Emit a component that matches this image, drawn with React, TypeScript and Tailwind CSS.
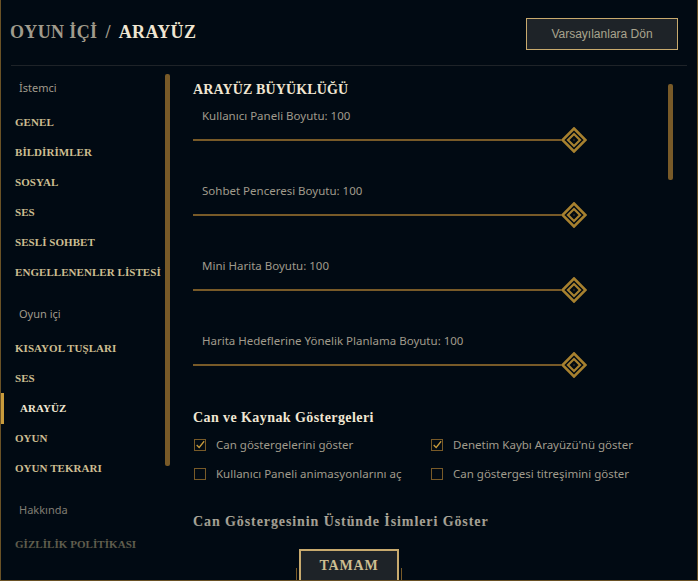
import React from "react";

const serif = { fontFamily: '"Liberation Serif", "DejaVu Serif", serif' };
const sans = { fontFamily: '"Noto Sans", "Liberation Sans", sans-serif' };
const sans2 = { fontFamily: '"Liberation Sans", "DejaVu Sans", sans-serif' };

function Thumb() {
  return (
    <svg width="26" height="26" viewBox="0 0 26 26" className="shrink-0">
      <path d="M13 1.5 L24.5 13 L13 24.5 L1.5 13 Z" fill="#010a13" stroke="#a7812f" strokeWidth="2.6" />
      <path d="M13 7 L19 13 L13 19 L7 13 Z" fill="#010a13" stroke="#a7812f" strokeWidth="2.2" />
      <circle cx="13" cy="13" r="1.2" fill="#2a2416" />
    </svg>
  );
}

function Slider({ label }: { label: string }) {
  return (
    <div className="flex h-[75px] flex-col">
      <div className="h-[16px] pl-[9px] text-[11.5px] leading-[16px] text-[#a09b8c]" style={sans}>
        {label}
      </div>
      <div className="mt-[3px] flex h-[26px] items-center">
        <div className="h-[2px] flex-1 bg-[#785a28]" />
        <Thumb />
      </div>
    </div>
  );
}

function Check({ checked, label }: { checked?: boolean; label: string }) {
  return (
    <div className="flex h-[29px] items-center gap-[10px]">
      <div className="flex h-[12px] w-[12px] items-center justify-center border border-[#785a28]">
        {checked && (
          <svg width="12" height="12" viewBox="0 0 12 12">
            <path d="M2 6 L5 9 L11 1.5" fill="none" stroke="#c89b3c" strokeWidth="1.5" />
          </svg>
        )}
      </div>
      <span className="whitespace-nowrap text-[11.5px] text-[#a09b8c]" style={sans}>
        {label}
      </span>
    </div>
  );
}

function NavHeader({ children, first }: { children: React.ReactNode; first?: boolean }) {
  return (
    <div
      className={`flex h-[30px] items-center pl-[18px] text-[11px] text-[#a09b8c] ${first ? "" : "mt-[12px]"} mb-[4px]`}
      style={sans}
    >
      {children}
    </div>
  );
}

function NavItem({ children, active }: { children: React.ReactNode; active?: boolean }) {
  return (
    <div className="flex h-[30px] items-center">
      <div className="flex h-[31px] w-[14px] shrink-0">
        {active && <div className="h-full w-[3px] bg-[#c89b3c]" />}
      </div>
      <span
        className={`whitespace-nowrap text-[11px] font-bold tracking-[0.005em] ${active ? "pl-[5px] text-[#f0e6d2]" : "text-[#cdbe91]"}`}
        style={serif}
      >
        {children}
      </span>
    </div>
  );
}

export default function App() {
  return (
    <div className="relative h-[581px] w-[698px] overflow-hidden border-b border-l border-r border-[#6a5226] bg-[#010a13]">
      {/* Header */}
      <div className="flex h-[65px] items-center justify-between pl-[9px] pr-[19px]">
        <div className="flex items-center text-[18px] font-bold tracking-[0.02em]" style={serif}>
          <span className="text-[#a09b8c]">OYUN İÇİ</span>
          <span className="mx-[8px] text-[#a09b8c]">/</span>
          <span className="text-[#f0e6d2]">ARAYÜZ</span>
        </div>
        <button
          className="mt-[2px] flex h-[32px] w-[152px] items-center justify-center border border-[#c8aa6e] bg-[#1e2328] text-[12px] text-[#a9a38e]"
          style={sans2}
        >
          Varsayılanlara Dön
        </button>
      </div>
      <div className="mx-[10px] h-px bg-[#1e2328]" />

      {/* Main */}
      <div className="flex">
        {/* Sidebar */}
        <div className="flex w-[192px] shrink-0">
          <div className="w-[164px] pt-[7px]">
            <NavHeader first>İstemci</NavHeader>
            <NavItem>GENEL</NavItem>
            <NavItem>BİLDİRİMLER</NavItem>
            <NavItem>SOSYAL</NavItem>
            <NavItem>SES</NavItem>
            <NavItem>SESLİ SOHBET</NavItem>
            <NavItem>ENGELLENENLER LİSTESİ</NavItem>
            <NavHeader>Oyun içi</NavHeader>
            <NavItem>KISAYOL TUŞLARI</NavItem>
            <NavItem>SES</NavItem>
            <NavItem active>ARAYÜZ</NavItem>
            <NavItem>OYUN</NavItem>
            <NavItem>OYUN TEKRARI</NavItem>
            <NavHeader>Hakkında</NavHeader>
            <NavItem>GİZLİLİK POLİTİKASI</NavItem>
          </div>
          <div className="pt-[8px]">
            <div className="h-[392px] w-[5px] rounded-[2px] bg-[#785a28]" />
          </div>
        </div>

        {/* Content */}
        <div className="flex flex-1">
          <div className="w-[394px] pt-[14px]">
            <div className="h-[20px] text-[14px] font-bold leading-[20px] tracking-[0.01em] text-[#f0e6d2]" style={serif}>
              ARAYÜZ BÜYÜKLÜĞÜ
            </div>
            <div className="mt-[8px]">
              <Slider label="Kullanıcı Paneli Boyutu: 100" />
              <Slider label="Sohbet Penceresi Boyutu: 100" />
              <Slider label="Mini Harita Boyutu: 100" />
              <Slider label="Harita Hedeflerine Yönelik Planlama Boyutu: 100" />
            </div>
            <div className="h-[20px] text-[14px] font-bold leading-[20px] tracking-[0.03em] text-[#f0e6d2]" style={serif}>
              Can ve Kaynak Göstergeleri
            </div>
            <div className="mt-[2px] grid w-[460px] grid-cols-[237px_1fr] pl-[1px]">
              <Check checked label="Can göstergelerini göster" />
              <Check checked label="Denetim Kaybı Arayüzü'nü göster" />
              <Check label="Kullanıcı Paneli animasyonlarını aç" />
              <Check label="Can göstergesi titreşimini göster" />
            </div>
            <div className="mt-[24px] h-[20px] whitespace-nowrap text-[14px] font-bold leading-[20px] tracking-[0.065em] text-[#f0e6d2]" style={serif}>
              Can Göstergesinin Üstünde İsimleri Göster
            </div>
          </div>
          <div className="ml-auto mr-[24px] pt-[18px]">
            <div className="h-[96px] w-[5px] rounded-[2px] bg-[#785a28]" />
          </div>
        </div>
      </div>

      {/* Bottom fade */}
      <div className="pointer-events-none absolute bottom-0 left-0 right-0 h-[90px] bg-gradient-to-b from-transparent to-[#010a13]/90" />

      {/* TAMAM button */}
      <div className="absolute bottom-0 left-1/2 flex -translate-x-1/2 items-end">
        <div className="h-[12px] w-px bg-[#785a28]" />
        <div className="mx-[2px] flex h-[31px] w-[100px] items-center justify-center border-[2px] border-b-0 border-[#c8aa6e] bg-[#1e2328] text-[14px] font-bold tracking-[0.06em] text-[#cdbe91]" style={serif}>
          TAMAM
        </div>
        <div className="h-[12px] w-px bg-[#785a28]" />
      </div>
    </div>
  );
}
